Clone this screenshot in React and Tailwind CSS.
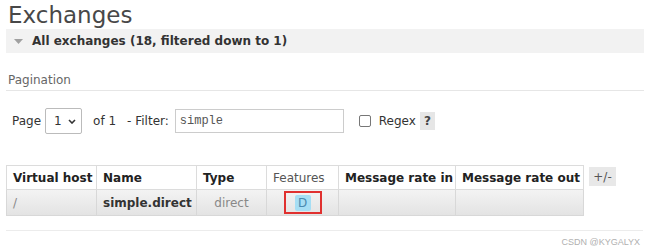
import React from "react";

const font = { fontFamily: '"DejaVu Sans", Verdana, sans-serif' };

const Header = ({ children, bold = true, w }) => (
  <th
    className={`h-[24px] overflow-hidden whitespace-nowrap border border-[#dcdcdc] bg-white pl-[6px] pr-0 text-left text-[12px] ${
      bold ? "font-bold text-[#222]" : "font-normal text-[#555]"
    } ${w}`}
  >
    {children}
  </th>
);

const App = () => {
  return (
    <div className="h-[249px] w-[650px] overflow-hidden bg-white px-[6px] text-[#333]" style={font}>
      <h1 className="h-[29px] pl-[2px] pt-[1px] text-[23px] font-normal leading-[28px] text-[#484848]">
        Exchanges
      </h1>

      <div className="flex h-[24px] w-[638px] items-center bg-[#f2f2f2]">
        <svg width="9" height="5" viewBox="0 0 9 5" className="ml-[8px] mr-[9px]">
          <polygon points="0,0 9,0 4.5,5" fill="#a0a0a0" />
        </svg>
        <span className="text-[12px] font-bold text-[#333]">All exchanges (18, filtered down to 1)</span>
      </div>

      <div className="mt-[20px] w-[638px] border-b border-[#e6e6e6] pb-[3px] pl-[2px] text-[12px] leading-[14px] text-[#666]">
        Pagination
      </div>

      <div className="mt-[17px] flex items-center pl-[6px] text-[12px] text-[#333]">
        <span>Page</span>
        <div className="ml-[4px] flex h-[26px] w-[37px] items-center justify-between rounded-[2px] border border-[#bbb] pl-[8px] pr-[5px]">
          <span>1</span>
          <svg width="8" height="5" viewBox="0 0 8 5">
            <polyline points="1,1 4,4 7,1" fill="none" stroke="#333" strokeWidth="1.6" />
          </svg>
        </div>
        <span className="ml-[11px]">of 1</span>
        <span className="ml-[11px]">- Filter:</span>
        <div
          className="ml-[6px] flex h-[24px] w-[169px] items-center border border-[#ccc] pl-[4px] text-[12px] text-[#555]"
          style={{ fontFamily: '"Liberation Mono", "DejaVu Sans Mono", monospace' }}
        >
          simple
        </div>
        <span className="ml-[15px] h-[12px] w-[12px] rounded-[2px] border border-[#777]" />
        <span className="ml-[8px]">Regex</span>
        <span className="ml-[4px] flex h-[18px] w-[15px] items-center justify-center bg-[#e6e6e6] font-bold text-[#444]">
          ?
        </span>
      </div>

      <div className="mt-[31px] flex items-start">
        <table className="w-[577px] table-fixed border-collapse">
          <thead>
            <tr>
              <Header w="w-[90px]">Virtual host</Header>
              <Header w="w-[100px]">Name</Header>
              <Header w="w-[70px]">Type</Header>
              <Header w="w-[72px]" bold={false}>
                Features
              </Header>
              <Header w="w-[117px]">Message rate in</Header>
              <Header w="w-[128px]">Message rate out</Header>
            </tr>
          </thead>
          <tbody>
            <tr className="h-[26px] bg-gradient-to-b from-[#f3f3f3] to-[#e3e3e3] text-[12px]">
              <td className="border border-[#d8d8d8] pl-[6px] text-[#888]">/</td>
              <td className="whitespace-nowrap border border-[#d8d8d8] pl-[6px] font-bold text-[#333]">simple.direct</td>
              <td className="border border-[#d8d8d8] text-center text-[#888]">direct</td>
              <td className="border border-[#d8d8d8]">
                <div className="flex justify-center">
                  <div className="flex h-[23px] w-[38px] items-center justify-center border-2 border-[#e0302f]">
                    <span className="flex h-[16px] w-[16px] items-center justify-center rounded-[2px] bg-[#a6def4] text-[12px] text-[#4a8ab0]">
                      D
                    </span>
                  </div>
                </div>
              </td>
              <td className="border border-[#d8d8d8]" />
              <td className="border border-[#d8d8d8]" />
            </tr>
          </tbody>
        </table>
        <span className="ml-[5px] mt-[2px] flex h-[19px] w-[27px] items-center justify-center bg-[#e8e8e8] text-[12px] text-[#555]">
          +/-
        </span>
      </div>

      <div className="mt-[14px] w-[637px] border-t border-[#ececec]" />
      <div
        className="mt-[6px] w-[634px] text-right text-[9px] leading-[10px] text-[#b0b0b0]"
        style={{ fontFamily: '"Liberation Sans", Arial, sans-serif' }}
      >
        CSDN @KYGALYX
      </div>
    </div>
  );
};

export default App;
